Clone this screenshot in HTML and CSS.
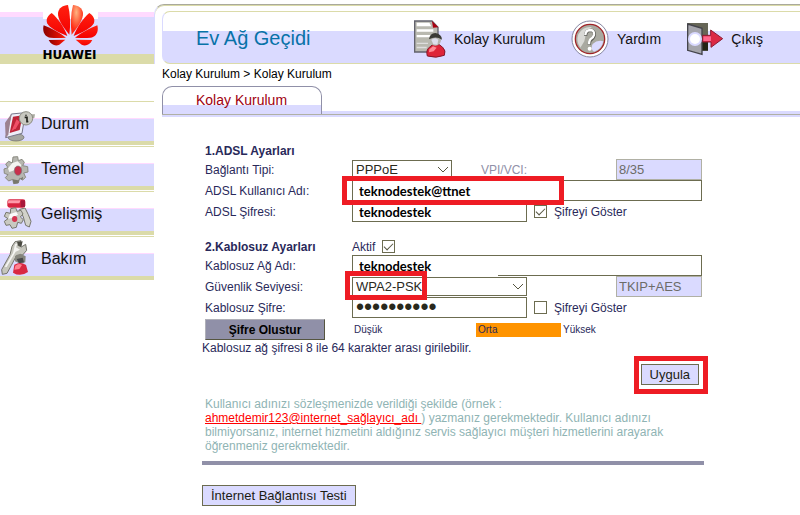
FILE: index.html
```html
<!DOCTYPE html>
<html lang="tr">

<head>
  <meta charset="UTF-8">
  <meta name="viewport" content="width=device-width, initial-scale=1.0">
  <title>Ev Ağ Geçidi - Kolay Kurulum</title>
  <link rel="stylesheet" href="styles.css">
</head>

<body>

  <aside class="sidebar">
    <div class="brand">
      <div class="logo">
        <svg width="55" height="45" viewBox="0 0 165 135">
          <defs>
            <linearGradient id="petal" x1="0" y1="0" x2="0" y2="1">
              <stop offset="0" stop-color="#ff2010"/>
              <stop offset="1" stop-color="#f40000"/>
            </linearGradient>
            <linearGradient id="dark" x1="0" y1="0" x2="1" y2="0">
              <stop offset="0" stop-color="#8c0000"/>
              <stop offset="1" stop-color="#ff1808"/>
            </linearGradient>
            <radialGradient id="light" cx=".45" cy=".25" r=".6">
              <stop offset="0" stop-color="#ffb480"/>
              <stop offset="1" stop-color="#ff2a14"/>
            </radialGradient>
          </defs>
          <path fill="url(#petal)" d="M79 92C58 66 44 46 45 27C47 12 60 4 75 3C82 30 83 62 79 92Z"/>
          <path fill="url(#light)" d="M86 92C107 66 121 46 120 27C118 12 105 4 90 3C83 30 82 62 86 92Z"/>
          <path fill="url(#petal)" d="M73 96C64 70 44 42 26 27C8 39 6 56 21 68C36 80 54 88 73 96Z"/>
          <path fill="url(#petal)" d="M92 96C101 70 121 42 139 27C157 39 159 56 144 68C129 80 111 88 92 96Z"/>
          <path fill="url(#dark)" d="M69 101C50 86 26 73 2 64C-3 83 6 100 23 101C38 103 54 102 69 101Z"/>
          <path fill="url(#petal)" d="M96 101C115 86 139 73 163 64C168 83 159 100 142 101C127 103 111 102 96 101Z"/>
          <path fill="url(#dark)" d="M67 107L17 108C24 122 37 128 49 122Z"/>
          <path fill="url(#petal)" d="M98 107L148 108C141 122 128 128 116 122Z"/>
        </svg>
        <span class="logo-name">HUAWEI</span>
      </div>
    </div>

    <nav class="menu">
      <a href="#" class="menu-item">
        <svg class="menu-icon" width="36" height="43" viewBox="0 0 108 129">
          <ellipse cx="48" cy="106" rx="24" ry="11" fill="#a5a5a0" stroke="#66665c" stroke-width="2"/>
          <path d="M34 36L76 32L66 94L17 107Z" fill="#eeeef8" stroke="#77778c" stroke-width="3"/>
          <path d="M15 62L34 36L25 98L17 107Z" fill="#9b8290"/>
          <path d="M39 44L68 40L59 84L29 93Z" fill="#bd2438"/>
          <path d="M50 52L59 60L48 79L34 88Z" fill="#f05068"/>
          <path d="M86 37L105 37L103 48L90 51Z" fill="#aaaaa0"/>
          <circle cx="78" cy="49" r="20" fill="#c8c8c0" stroke="#8c8c80" stroke-width="3"/>
          <path d="M74 46h7v13h4M78 38v3" fill="none" stroke="#22221c" stroke-width="5"/>
        </svg>
        <span>Durum</span>
      </a>
      <a href="#" class="menu-item">
        <svg class="menu-icon" width="36" height="43" viewBox="0 0 108 129">
          <path d="M39 30L53 29L55 41L66 37L73 46L68 56L83 59L84 75L71 78L77 91L68 99L59 94L55 108L41 110L38 97L26 102L16 92L24 83L13 79L12 66L24 62L17 51L26 43L37 48Z" fill="#b6b6b0" stroke="#8a8a80" stroke-width="3"/>
          <path d="M37 48L53 43L64 54L58 65L43 70L28 75L24 64Z" fill="#f4f4f2"/>
          <path d="M38 97L54 100L69 89L68 98L58 95L55 108L41 110Z" fill="#77776d"/>
          <ellipse cx="54" cy="71" rx="11" ry="14" fill="#c8304c" stroke="#76767a" stroke-width="2"/>
        </svg>
        <span>Temel</span>
      </a>
      <a href="#" class="menu-item">
        <svg class="menu-icon" width="36" height="43" viewBox="0 0 108 129">
          <path d="M59 52L75 48L85 68L93 88L88 105L77 100L70 75Z" fill="#d2d2ca" stroke="#77776d" stroke-width="3"/>
          <rect x="22" y="22" width="54" height="25" rx="7" fill="#d82440"/>
          <path d="M25 25H62L58 34H24Z" fill="#ff9aaa"/>
          <path d="M62 25h13v20H62Z" fill="#a8183c"/>
          <path d="M32 50L47 47L51 58L63 55L69 66L61 75L70 83L64 94L53 91L49 106L36 109L30 98L18 100L13 88L24 80L13 73L18 61L31 64Z" fill="#c9c9c2" stroke="#77776d" stroke-width="3"/>
          <path d="M30 66L49 60L54 68L36 78L25 80Z" fill="#fafafa"/>
          <ellipse cx="44" cy="81" rx="8" ry="9" fill="#d43450"/>
        </svg>
        <span>Gelişmiş</span>
      </a>
      <a href="#" class="menu-item">
        <svg class="menu-icon" width="36" height="43" viewBox="0 0 108 129">
          <path d="M36 28L45 14L63 11L54 25L64 30L77 22L80 40L68 54L50 55L34 85L21 109L7 112L5 98L30 53Z" fill="#c6c6bd" stroke="#74746c" stroke-width="3"/>
          <path d="M45 22L53 18L48 31L60 38L47 44L20 90L14 89L39 48Z" fill="#f5f5f2"/>
          <path d="M51 14L68 13L64 30L54 25Z" fill="#4b4b43"/>
          <path d="M45 57L61 50L77 58L76 76L61 80L45 73Z" fill="#85857c"/>
          <path d="M50 66L68 62L72 76L57 79Z" fill="#48484a"/>
          <path d="M43 83Q61 72 78 84L84 105Q61 121 39 107Z" fill="#d92842"/>
          <path d="M46 86Q57 77 66 84L58 96L43 98Z" fill="#ff8190"/>
        </svg>
        <span>Bakım</span>
      </a>
    </nav>
  </aside>

  <main class="main">
    <header class="top">
      <div class="top-panel">
        <h1>Ev Ağ Geçidi</h1>
        <nav class="links">
          <a href="#">
            <svg width="32" height="38" viewBox="0 0 96 114">
              <path d="M2 3H54L72 22V96H2Z" fill="#b9b9b0" stroke="#62626c" stroke-width="4"/>
              <path d="M8 8H46L52 19H8ZM8 28H58V35H8ZM8 45H50V52H8Z" fill="#fff"/>
              <path d="M8 68H42V72H8ZM8 80H38V85H8Z" fill="#dedede"/>
              <path d="M54 3L73 22L57 23Z" fill="#a80010"/>
              <path d="M40 108Q35 91 46 82L56 74H76L86 82Q97 92 91 106Q67 116 40 108Z" fill="#de2438" stroke="#85182b" stroke-width="3"/>
              <path d="M46 88L57 79L68 83L59 94L45 97Z" fill="#ff8994"/>
              <circle cx="64" cy="60" r="17" fill="#b4b4ad"/>
              <path d="M45 58Q47 40 64 39Q83 42 84 59Q66 46 45 58Z" fill="#3b3b35"/>
              <path d="M52 59Q64 50 73 59L70 74L58 73Z" fill="#dedeec"/>
            </svg>
            <span>Kolay Kurulum</span>
          </a>
          <a href="#">
            <svg width="38" height="38" viewBox="0 0 114 114">
              <circle cx="57" cy="57" r="54" fill="#fff" stroke="#8585a0" stroke-width="3"/>
              <circle cx="57" cy="57" r="44" fill="#a9a9a0" stroke="#a02428" stroke-width="4"/>
              <path d="M22 43Q36 18 63 21Q44 32 40 64L28 83Q14 65 22 43Z" fill="#d9d9d5"/>
              <path d="M65 72Q79 59 97 64Q92 88 69 95Q57 87 65 72Z" fill="#dadaff"/>
              <path d="M44 47Q44 31 58 31Q72 32 70 46Q68 54 59 60Q55 64 55 74" fill="none" stroke="#5e5e58" stroke-width="10"/>
              <path d="M43 45Q44 30 58 30Q71 31 69 45Q67 53 58 58Q54 63 54 73" fill="none" stroke="#fff" stroke-width="7"/>
              <circle cx="56" cy="86" r="6" fill="#fff"/>
            </svg>
            <span>Yardım</span>
          </a>
          <a href="#">
            <svg width="36" height="34" viewBox="0 0 108 102">
              <path d="M2 3H63V86H2Z" fill="#666656"/>
              <path d="M45 55H63V86H45Z" fill="#242414"/>
              <path d="M2 6L45 19V97L2 85Z" fill="#a5a5ac" stroke="#44444b" stroke-width="4"/>
              <circle cx="24" cy="51" r="21" fill="#dadaff"/>
              <circle cx="24" cy="51" r="15" fill="#fff"/>
              <path d="M47 40H71V24L107 50L72 76V60H47Z" fill="#dc2944" stroke="#8c1b32" stroke-width="3"/>
              <path d="M49 43H72V57H49Z" fill="#ff668d"/>
            </svg>
            <span>Çıkış</span>
          </a>
        </nav>
      </div>
    </header>

    <div class="breadcrumb">Kolay Kurulum &gt; Kolay Kurulum</div>

    <div class="tabs">
      <a href="#" class="tab">Kolay Kurulum</a>
    </div>

    <form class="setup">
      <h2>1.ADSL Ayarları</h2>
      <div class="row">
        <label class="name" for="connType">Bağlantı Tipi:</label>
        <span class="select short">
          <select id="connType">
            <option>PPPoE</option>
          </select>
          <svg width="12" height="7" viewBox="0 0 12 7"><path d="M1 1l5 5 5-5" fill="none" stroke="#555540"/></svg>
        </span>
        <label class="vpi" for="vpi">VPI/VCI:</label>
        <input type="text" class="fixed" id="vpi" value="8/35" disabled>
      </div>
      <div class="row">
        <label class="name" for="user">ADSL Kullanıcı Adı:</label>
        <div class="marked wide">
          <input type="text" class="typed" id="user" value="teknodestek@ttnet">
          <span class="mark mark-user"></span>
        </div>
      </div>
      <div class="row">
        <label class="name" for="adslPass">ADSL Şifresi:</label>
        <input type="text" class="typed medium" id="adslPass" value="teknodestek">
        <label class="check"><input type="checkbox" checked> Şifreyi Göster</label>
      </div>

      <div class="row section">
        <h2 class="name">2.Kablosuz Ayarları</h2>
        <label class="active">Aktif <input type="checkbox" checked></label>
      </div>
      <div class="row">
        <label class="name" for="ssid">Kablosuz Ağ Adı:</label>
        <input type="text" class="typed wide ssid" id="ssid" value="teknodestek">
      </div>
      <div class="row">
        <label class="name" for="security">Güvenlik Seviyesi:</label>
        <span class="select medium marked">
          <select id="security">
            <option>WPA2-PSK</option>
          </select>
          <svg width="12" height="7" viewBox="0 0 12 7"><path d="M1 1l5 5 5-5" fill="none" stroke="#555540"/></svg>
          <span class="mark mark-security"></span>
        </span>
        <input type="text" class="fixed" aria-label="Şifreleme" value="TKIP+AES" disabled>
      </div>
      <div class="row">
        <label class="name" for="wifiPass">Kablosuz Şifre:</label>
        <input type="password" class="medium" id="wifiPass" value="1234567890">
        <label class="check"><input type="checkbox"> Şifreyi Göster</label>
      </div>
      <div class="row strength-row">
        <div class="name"><button type="button" class="generate">Şifre Olustur</button></div>
        <div class="strength">
          <span>Düşük</span>
          <span class="on">Orta</span>
          <span>Yüksek</span>
        </div>
      </div>
      <p class="note">Kablosuz ağ şifresi 8 ile 64 karakter arası girilebilir.</p>

      <div class="apply-row">
        <div class="apply-mark"><button type="button" class="btn">Uygula</button></div>
      </div>

      <p class="help">
        Kullanıcı adınızı sözleşmenizde verildiği şekilde (örnek :<br>
        <a href="#">ahmetdemir123@internet_sağlayıcı_adı&nbsp;</a>) yazmanız gerekmektedir. Kullanıcı adınızı<br>
        bilmiyorsanız, internet hizmetini aldığınız servis sağlayıcı müşteri hizmetlerini arayarak<br>
        öğrenmeniz gerekmektedir.
      </p>
      <hr>
      <button type="button" class="btn">İnternet Bağlantısı Testi</button>
    </form>
  </main>

</body>

</html>
```

FILE: styles.css
```css
* {
  box-sizing: border-box;
}

body {
  display: flex;
  margin: 0;
  background: #fff;
  color: #29295a;
  font-family: "Liberation Sans", Arial, sans-serif;
  font-size: 12px;
}

a {
  color: #111;
  text-decoration: none;
}

h1,
h2,
p {
  margin: 0;
}

/* Left menu */
.sidebar {
  flex: none;
  width: 154px;
}

.brand {
  display: flex;
  justify-content: center;
  height: 101px;
  padding-top: 4px;
  background: linear-gradient(#fff 12px, #ffdaff 12px, #ffdaff 17px, #dadaff 17px, #dadaff 54px, #dbdba9 54px, #dbdba9 64px, #fff 64px);
}

.logo {
  display: flex;
  flex-direction: column;
  margin-right: 14px;
}

.logo svg {
  background: linear-gradient(#fff 15px, transparent 15px);
}

.logo-name {
  color: #000;
  font: bold 12px/13px "DejaVu Sans", sans-serif;
}

.menu-item {
  display: flex;
  gap: 5px;
  height: 45px;
  border-top: 1px solid #dbdba9;
  font-size: 16px;
  line-height: 44px;
  background: linear-gradient(#fff 16px, #ffdaff 16px, #ffdaff 17px, #dadaff 17px, #dadaff 39px, #dbdba9 39px, #dbdba9 43px, #fff 43px);
}

.menu-icon {
  flex: none;
}

/* Header */
.main {
  flex: 1;
  min-width: 0;
}

.top {
  margin-top: 4px;
  padding: 6px 0 0 7px;
  border-top: 1px solid #aaaa9c;
  border-left: 1px solid #dadaff;
  border-top-left-radius: 10px;
  box-shadow: inset 0 1px #dbdba9;
}

.top-panel {
  display: flex;
  align-items: center;
  height: 53px;
  padding: 2px 0 0 33px;
  border: 1px solid #dbdba9;
  border-left-color: #dadaff;
  border-right: 0;
  border-radius: 8px 0 0 8px;
  background: linear-gradient(#fff 19px, #dadaff 19px);
}

h1 {
  flex: none;
  width: 218px;
  color: #0872a8;
  font-size: 20px;
  font-weight: normal;
}

.links {
  display: flex;
  gap: 26px;
  font-size: 14px;
}

.links a {
  display: flex;
  align-items: center;
  gap: 8px;
  white-space: nowrap;
}

.breadcrumb {
  padding: 3px 8px 5px;
  color: #000;
  line-height: 14px;
}

.tabs {
  margin-left: 8px;
  background: linear-gradient(#b0b0a4, #b0b0a4) 0 28px / 100% 1px no-repeat, linear-gradient(transparent 25px, #dadaff 25px);
  height: 31px;
}

.tab {
  display: block;
  width: 160px;
  height: 28px;
  padding-left: 33px;
  border: 1px solid #9090a8;
  border-bottom: 0;
  border-radius: 10px 10px 0 0;
  background: linear-gradient(#fff 18px, #dadaff 18px);
  color: #a00010;
  font-size: 14px;
  line-height: 26px;
}

/* Form */
.setup {
  width: 502px;
  margin: 26px 0 8px 48px;
}

h2 {
  padding-left: 3px;
  font-size: 12px;
  line-height: 16px;
}

.row {
  display: flex;
  align-items: center;
  height: 21px;
  padding-left: 3px;
}

.section {
  height: 17px;
  margin-top: 16px;
}

.name {
  flex: none;
  width: 147px;
  padding: 0;
}

input,
select {
  height: 21px;
  margin: 0;
  padding: 0 3px;
  border: 1px solid #6c6c50;
  border-radius: 0;
  background: #fff;
  color: #29291c;
  font: 13px "Liberation Sans", Arial, sans-serif;
}

.short {
  width: 100px;
}

.medium {
  width: 175px;
}

.wide {
  width: 350px;
}

.select {
  position: relative;
}

.select select {
  display: block;
  width: 100%;
  height: 19px;
  appearance: none;
}

.select svg {
  position: absolute;
  top: 6px;
  right: 3px;
}

.typed {
  padding-left: 6px;
  color: #000;
  font: bold 13px Lato, sans-serif;
}

.marked {
  position: relative;
}

.marked .typed {
  display: block;
  width: 100%;
}

.fixed {
  width: 86px;
  margin-left: auto;
  margin-right: 2px;
  padding: 0 2px;
  border-color: #b0b0a4;
  background: #dadaff;
  color: #6c6c68;
}

.vpi {
  margin-left: 29px;
  color: #9090a8;
}

/* lower edge starts only after the security drop-down mark */
.ssid {
  border-bottom-color: transparent;
  background: linear-gradient(#6c6c50, #6c6c50) right bottom / 204px 1px no-repeat border-box;
}

input[type="password"] {
  font-size: 23px;
}

input[type="checkbox"] {
  display: grid;
  place-items: center;
  width: 13px;
  height: 13px;
  padding: 0;
  appearance: none;
}

input[type="checkbox"]:checked::after {
  content: "";
  width: 8px;
  height: 4px;
  margin-bottom: 3px;
  border: solid #555540;
  border-width: 0 0 1px 1px;
  transform: rotate(-45deg);
}

.check,
.active {
  display: flex;
  align-items: center;
  gap: 7px;
}

.check {
  margin-left: 7px;
}

/* Red marks on the steps to fill in */
.mark {
  position: absolute;
  border: 5px solid #ee1c24;
  pointer-events: none;
}

.mark-user {
  top: -4px;
  left: -10px;
  width: 222px;
  height: 29px;
}

.mark-security {
  top: -6px;
  left: -7px;
  width: 82px;
  height: 29px;
}

button {
  font-family: inherit;
}

.strength-row {
  height: 23px;
}

.generate {
  display: block;
  width: 120px;
  height: 21px;
  padding: 0;
  border: 1px solid #b0b0b8;
  border-right-color: #555540;
  border-bottom-color: #555540;
  background: #9090a8;
  color: #000;
  font-size: 12px;
  font-weight: bold;
}

.strength {
  display: flex;
  font-size: 10px;
  line-height: 14px;
}

.strength span {
  padding-left: 2px;
}

.strength span:first-child {
  width: 124px;
}

.strength .on {
  width: 85px;
  background: #ff9400;
}

.note {
  line-height: 15px;
}

.apply-row {
  display: flex;
  justify-content: flex-end;
}

.apply-mark {
  margin-right: -4px;
  padding: 3px 4px 4px 2px;
  border: 5px solid #ee1c24;
}

.btn {
  display: block;
  height: 21px;
  padding: 0 8px;
  border: 1px solid #6c6c50;
  background: #dadaff;
  color: #1c1c14;
  font-size: 13px;
}

.help {
  padding: 3px 0 0 3px;
  color: #8fb4b4;
  line-height: 14px;
  white-space: nowrap;
}

.help a {
  color: #f00;
  text-decoration: underline;
}

hr {
  height: 4px;
  margin: 8px 0 20px;
  border: 0;
  background: #9090a8;
}
```
